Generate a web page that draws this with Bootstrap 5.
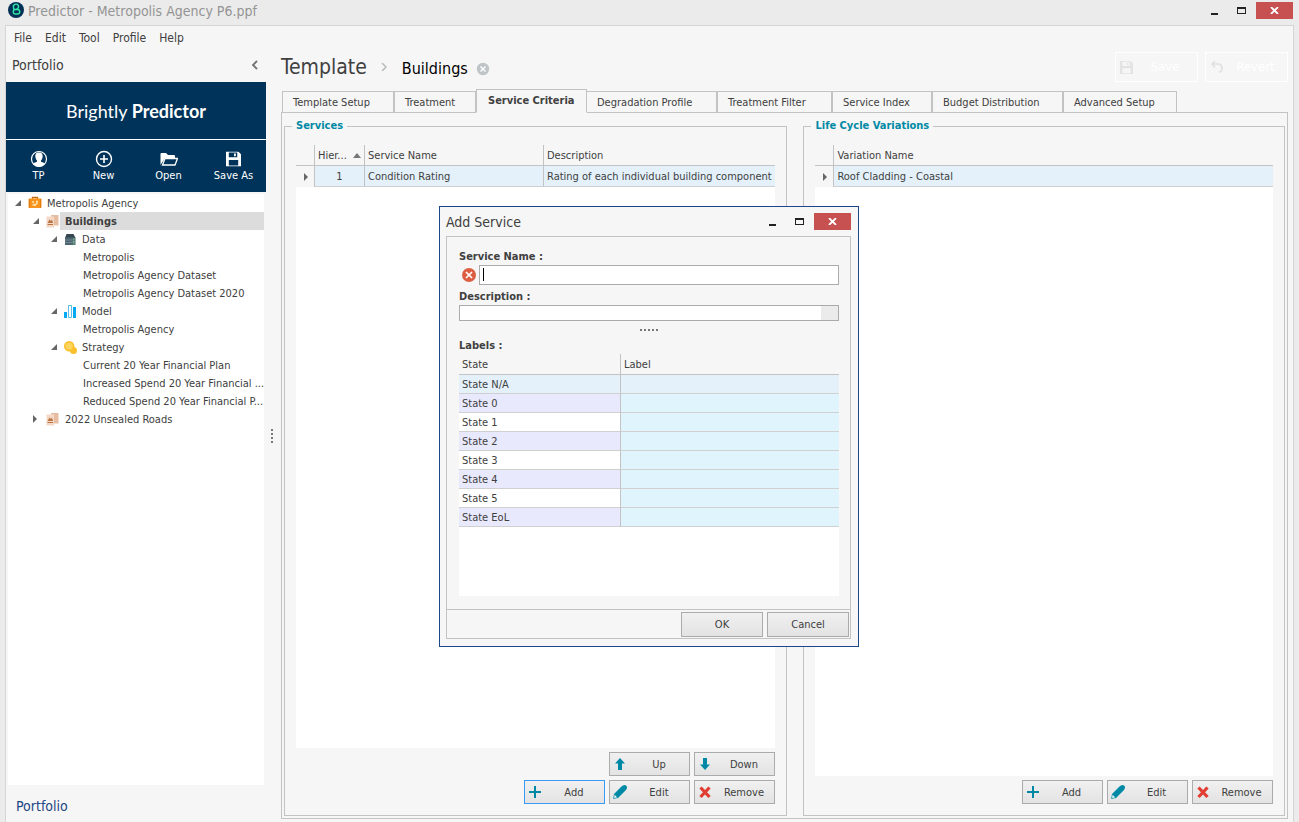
<!DOCTYPE html>
<html lang="en">
<head>
<meta charset="utf-8">
<meta name="viewport" content="width=device-width, initial-scale=1">
<title>Predictor - Metropolis Agency P6.ppf</title>
<link href="https://cdn.jsdelivr.net/npm/bootstrap@5.3.0/dist/css/bootstrap.min.css" rel="stylesheet">
<style>
:root{--line:#c3c3c3;--ink:#404040;--teal:#0089a5;--navy:#003359;--face:#f6f6f6}
body{font:11px/14px "DejaVu Sans Condensed","DejaVu Sans",sans-serif;color:var(--ink);background:#ebebeb;min-height:100vh}
button{font:inherit;color:inherit;background:none;border:0;padding:0}
svg{display:block;flex:none}
h1,h2,h3{margin:0;font-weight:400}
a{color:inherit;text-decoration:none}
.title-bar{height:25px}
.title-bar h1{font-size:14px;line-height:22px;color:#949494;padding-left:3px}
.win-controls{padding:2px 6px 0 0}
.win-close{width:37px;height:17px;background:#c75050;margin-left:1px}
.win-btn{width:27px;height:17px}
.app-frame{margin:0 5px;border:1px solid #d5d5d5;border-bottom:0;background:var(--face)}
.menu-bar{height:24px;padding-left:8px;gap:13px;font-size:12px}
.side-pane{width:260px}
.side-head{height:32px;padding:0 7px 2px 6px;font-size:14px}
.brand{height:58px;background:var(--navy);border-bottom:1px solid #fff;color:#fff;font:18px/24px Lato,sans-serif}
.side-tools{height:52px;background:var(--navy);color:#fff;padding-top:1px}
.side-tools button{gap:1px}
.side-tools svg{height:18px}
.tree{background:#fff;margin:2px 2px 0}
.tree li{display:flex;align-items:center;height:18px;white-space:nowrap}
.tree a{flex:1;min-width:0;line-height:17px;padding:1px 0 0 5px}
.tree .arrow{width:19px;padding-left:6px}
.lv1{padding-left:1px}.lv2{padding-left:19px}.lv3{padding-left:37px}.lv4{padding-left:70px}
.tree .chosen{background:#dcdcdc;font-weight:700}
.side-foot{height:37px;padding:5px 10px 0;font-size:14px;color:#1c4685}
.side-split{width:15px;padding-right:3px}
.dots{display:grid;gap:2px}
.dots i{width:2px;height:2px;background:#777}
.page-head{height:39px;padding:0 5px 5px 0}
.page-head h2{font-size:21px;line-height:28px}
.page-head h3{font-size:16px;line-height:20px;color:#000;padding-top:3px}
.page-head .crumb{margin:0 15px 0 14px}
.head-tools{gap:7px}
.ghost-btn{width:83px;height:30px;border:1px solid #fff;color:#fff;font-size:13px}
.tab-strip{height:24px;padding-left:1px;margin-bottom:-1px;position:relative}
.tab-strip button{height:22px;border:1px solid var(--line);padding:1px 0 0 10px;text-align:left;white-space:nowrap}
.tab-strip .current{height:24px;font-weight:700;background:var(--face);border-bottom-color:var(--face);padding:0 0 0 11px}
.tab-strip .after{border-left:0}
.work-area{border:1px solid var(--line);margin:0 5px 3px 0;padding:6px 2px 2px;gap:16px}
fieldset{border:1px solid var(--line);padding:12px 11px 11px}
legend{float:none;width:auto;font:700 11px/14px "DejaVu Sans Condensed",sans-serif;color:var(--teal);margin:0 0 0 -4px;padding:0 4px}
fieldset.w-services{flex:504 1 0;min-width:0}
fieldset.w-cycle{flex:481 1 0;min-width:0}
.sheet{background:#fff}
.sheet table{width:100%;table-layout:fixed;border-collapse:separate;border-spacing:0}
.sheet th{height:21px;padding:1px 3px 0;font-weight:400;background:var(--face);border-bottom:1px solid var(--line);white-space:nowrap;overflow:hidden}
.sheet td{height:21px;padding:1px 3px 0;background:#e4f1fb;border-bottom:1px solid #d0d0d0;white-space:nowrap;overflow:hidden}
.sheet th+th,.sheet td+td{border-left:1px solid var(--line)}
.sheet .gutter{background:var(--face);border-bottom-color:var(--face);padding-right:6px}
.tool-btn{width:81px;height:24px;border:1px solid #ababab;background:linear-gradient(#f0f0f0,#e3e3e3);display:flex;align-items:center;padding-left:2px}
.tool-btn span{flex:1;text-align:center;padding-top:1px}
.tool-btn.primed{border-color:#3b99f0}
.dialog-box{position:absolute;left:439px;top:206px;width:420px;border:1px solid #1c4685;background:var(--face);padding:6px 7px 7px 6px}
.dialog-head{height:23px}
.dialog-head h2{font-size:14px;line-height:19px}
.dialog-body{border:1px solid var(--line)}
.dialog-form{padding:13px 11px 13px 12px}
.dialog-form label,.cap{display:block;font-weight:700;line-height:14px}
.name-row{margin:1px 0 5px}
.name-row svg{margin:0 3px}
.name-box{height:20px;border:1px solid #ababab;background:#fff;position:relative}
.name-box::before{content:"";position:absolute;left:3px;top:2px;width:1px;height:13px;background:#000}
.dialog-box input{border:0;background:#fff;outline:0;padding:0 3px;min-width:0;caret-color:transparent}
.desc-box{height:16px;border:1px solid #ababab;background:#fff;margin-top:1px}
.desc-box button{width:17px;background:#ebebeb}
.cap{margin-bottom:1px}
.state-sheet{height:242px}
.state-sheet td{height:19px;background:#fff}
.state-sheet tr:nth-child(even) td{background:#e9e9fd}
.state-sheet td+td,.state-sheet tr:nth-child(even) td+td{background:#e0f4fe}
.state-sheet tr:first-child td{background:#e4f1fb}
.dialog-foot{border-top:1px solid var(--line);padding:2px 1px 1px;gap:4px}
.dialog-foot .tool-btn{width:82px;height:25px;padding:0}
</style>
</head>
<body class="d-flex flex-column">
<svg width="0" height="0" class="position-absolute" aria-hidden="true">
  <defs>
    <symbol id="open" viewBox="0 0 6 6"><path d="M6 0v6H0z" fill="#666"/></symbol>
    <symbol id="shut" viewBox="0 0 4 8"><path d="M0 0l4 4-4 4z" fill="#666"/></symbol>
    <symbol id="min" viewBox="0 0 7 9"><path d="M0 7h7v2H0z" fill="#222"/></symbol>
    <symbol id="max" viewBox="0 0 9 7"><path d="M0 0h9v7H0zM1 2v4h7V2z" fill="#222" fill-rule="evenodd"/></symbol>
    <symbol id="cross" viewBox="0 0 9 7"><path d="M1 0l7 7M8 0L1 7" stroke="#fff" stroke-width="1.8"/></symbol>
    <symbol id="plans" viewBox="0 0 14 14"><path d="M5 1h7.500v10.500H5z" fill="#e6bda0"/><path d="M.5 2.500h7.500v11H.5z" fill="#f3d9c6"/><path d="M1.500 9l2-3.500 1.500 1.500 1-1.500 1 3.500zM1.500 10h5.500v1H1.500z" fill="#bb7544"/></symbol>
    <symbol id="plus" viewBox="0 0 16 16"><path d="M7 2h2v5h5v2H9v5H7V9H2V7h5z" fill="#0089a5"/></symbol>
    <symbol id="pencil" viewBox="0 0 16 16"><path d="M1.500 14.500l1-4.500 3.500 3.500z" fill="#fff" stroke="#0089a5" stroke-width=".8"/><path d="M2 10L9.500 2.500Q12 0 14 1.500T14 6L6 14z" fill="#0089a5"/></symbol>
    <symbol id="remove" viewBox="0 0 16 16"><path d="M3.500 3.500l9 9.500M12.500 3.500l-9 9.500" stroke="#e03c31" stroke-width="3.200"/></symbol>
    <symbol id="up" viewBox="0 0 16 16"><path d="M8 2l5 5.500h-3V14H6V7.500H3z" fill="#0089a5"/></symbol>
    <symbol id="down" viewBox="0 0 16 16"><path d="M8 14l5-5.500h-3V2H6v6.500H3z" fill="#0089a5"/></symbol>
    <symbol id="disk" viewBox="0 0 16 16"><path d="M0 0h13l3 3v13H0zM3 1v5h9V1zM3 9v6h10V9zM8.500 2h2v3h-2z" fill="currentColor" fill-rule="evenodd"/></symbol>
  </defs>
</svg>

<header class="title-bar d-flex align-items-start">
  <svg class="ms-2" width="17" height="18" viewBox="0 0 17 18"><circle cx="8" cy="10" r="8" fill="#043055"/><path d="M5.500 5v3q0 1.500 2 1.500h2a2.200 2.200 0 1 1 0 4.500H7.500a2.200 2.200 0 0 1 0-4.500M5.500 6.500a2.300 2.300 0 0 1 5 .2q0 2-2.500 2.800" fill="none" stroke="#2ee6a8" stroke-width="1.400"/></svg>
  <h1 class="flex-grow-1">Predictor - Metropolis Agency P6.ppf</h1>
  <div class="win-controls d-flex">
    <button class="win-btn d-flex justify-content-center align-items-center" aria-label="Minimize"><svg width="7" height="9"><use href="#min"/></svg></button>
    <button class="win-btn d-flex justify-content-center align-items-center" aria-label="Maximize"><svg width="9" height="7"><use href="#max"/></svg></button>
    <button class="win-close d-flex justify-content-center align-items-center" aria-label="Close"><svg width="9" height="7"><use href="#cross"/></svg></button>
  </div>
</header>

<div class="app-frame flex-grow-1 d-flex flex-column">
  <nav class="menu-bar d-flex align-items-center" aria-label="Main menu">
    <a href="#">File</a><a href="#">Edit</a><a href="#">Tool</a><a href="#">Profile</a><a href="#">Help</a>
  </nav>
  <div class="flex-grow-1 d-flex">
    <aside class="side-pane flex-shrink-0 d-flex flex-column">
      <div class="side-head d-flex align-items-center justify-content-between">
        <span>Portfolio</span>
        <button aria-label="Collapse"><svg width="9" height="10" viewBox="0 0 9 10"><path d="M7 1L3 5l4 4" fill="none" stroke="#707070" stroke-width="1.800"/></svg></button>
      </div>
      <div class="brand d-flex align-items-center justify-content-center"><span>Brightly <b>Predictor</b></span></div>
      <div class="side-tools d-flex align-items-center">
        <button class="d-flex flex-column align-items-center col-3"><svg width="18" height="18" viewBox="0 0 18 18"><circle cx="9" cy="9" r="7.500" fill="none" stroke="#fff" stroke-width="1.200"/><path d="M9 2.500c3 0 4 2 3.600 4.500-.3 2-1 3-1.600 3.600v1.200c2 .7 3.500 1 4 2Q12.500 17 9 17t-6-3.200c.5-1 2-1.300 4-2v-1.200C6.400 10 5.700 9 5.400 7 5 4.500 6 2.500 9 2.500z" fill="#fff"/></svg>TP</button>
        <button class="d-flex flex-column align-items-center col-3"><svg width="18" height="18" viewBox="0 0 18 18"><circle cx="9" cy="9" r="7.500" fill="none" stroke="#fff" stroke-width="1.400"/><path d="M9 5v8M5 9h8" stroke="#fff" stroke-width="1.600"/></svg>New</button>
        <button class="d-flex flex-column align-items-center col-3"><svg width="18" height="18" viewBox="0 0 18 18"><path d="M.5 15V4q0-1 1-1h4.500l2 2h6q1 0 1 1v2H5z" fill="#fff"/><path d="M5 8.500h12.500L15 15H2.500z" fill="#003359" stroke="#fff" stroke-width="1.300"/></svg>Open</button>
        <button class="d-flex flex-column align-items-center col-3"><svg width="15" height="18" viewBox="0 -1 16 18" color="#fff"><use href="#disk" width="16" height="16"/></svg>Save As</button>
      </div>
      <ul class="tree list-unstyled mb-0 flex-grow-1">
        <li class="lv1"><span class="arrow"><svg width="6" height="6"><use href="#open"/></svg></span><svg width="14" height="14" viewBox="0 0 14 14"><path d="M4.500 3V1.500h5V3" fill="none" stroke="#c26c13" stroke-width="1.300"/><rect x=".5" y="2.500" width="13" height="9.500" rx="1" fill="#f7941d"/><path d="M1.500 3v9M12.500 3v9" stroke="#df7d10"/><path d="M4 6h2M8 5.500h2M4.500 9.500l1.500-1 1 1 2.500-3" fill="none" stroke="#ffe3b0" stroke-width="1.400"/></svg><a href="#">Metropolis Agency</a></li>
        <li class="lv2"><span class="arrow"><svg width="6" height="6"><use href="#open"/></svg></span><svg width="14" height="14"><use href="#plans"/></svg><a href="#" class="chosen">Buildings</a></li>
        <li class="lv3"><span class="arrow"><svg width="6" height="6"><use href="#open"/></svg></span><svg width="13" height="13" viewBox="0 0 13 13"><path d="M2.500 1h7l2 4H1z" fill="#37474f"/><path d="M1 4.500h10.500V12H1z" fill="#4d6672"/><path d="M1 7h10.500M1 9.500h10.500" stroke="#8499a3" stroke-width=".6"/><path d="M9 6h1.500M9 8.500h1.500M9 11h1.500" stroke="#6fd67c"/></svg><a href="#">Data</a></li>
        <li class="lv4"><a href="#">Metropolis</a></li>
        <li class="lv4"><a href="#">Metropolis Agency Dataset</a></li>
        <li class="lv4"><a href="#">Metropolis Agency Dataset 2020</a></li>
        <li class="lv3"><span class="arrow"><svg width="6" height="6"><use href="#open"/></svg></span><svg width="13" height="13" viewBox="0 0 13 13"><path d="M0 7h3v6H0zM9 2h3v11H9z" fill="#00aaf2"/><path d="M4.500.5h3v12h-3z" fill="#fff" stroke="#59bfe8"/></svg><a href="#">Model</a></li>
        <li class="lv4"><a href="#">Metropolis Agency</a></li>
        <li class="lv3"><span class="arrow"><svg width="6" height="6"><use href="#open"/></svg></span><svg width="13" height="13" viewBox="0 0 13 13"><circle cx="9.500" cy="9.500" r="3.500" fill="#f9bf2c"/><circle cx="5.200" cy="5.200" r="5.200" fill="#fbc02d"/><circle cx="5.200" cy="5.200" r="3.400" fill="#fdd660"/></svg><a href="#">Strategy</a></li>
        <li class="lv4"><a href="#">Current 20 Year Financial Plan</a></li>
        <li class="lv4"><a href="#">Increased Spend 20 Year Financial ...</a></li>
        <li class="lv4"><a href="#">Reduced Spend 20 Year Financial P...</a></li>
        <li class="lv2"><span class="arrow"><svg width="4" height="8"><use href="#shut"/></svg></span><svg width="14" height="14"><use href="#plans"/></svg><a href="#">2022 Unsealed Roads</a></li>
      </ul>
      <div class="side-foot d-flex align-items-center"><a href="#">Portfolio</a></div>
    </aside>
    <div class="side-split flex-shrink-0 d-flex align-items-center justify-content-center"><span class="dots"><i></i><i></i><i></i><i></i></span></div>

    <main class="flex-grow-1 d-flex flex-column" style="min-width:0">
      <div class="page-head d-flex align-items-center">
        <h2>Template</h2>
        <svg class="crumb" width="6" height="8" viewBox="0 0 6 8"><path d="M1 0l4 4-4 4" fill="none" stroke="#b5b9bb" stroke-width="1.500"/></svg>
        <h3>Buildings</h3>
        <button class="ms-2 pt-1" aria-label="Close Buildings"><svg width="14" height="14" viewBox="0 0 14 14"><circle cx="7" cy="7" r="6.200" fill="#bfc4c6"/><path d="M4.500 4.500l5 5m0-5l-5 5" stroke="#fff" stroke-width="1.400"/></svg></button>
        <div class="head-tools d-flex ms-auto">
          <button class="ghost-btn d-flex align-items-center ps-1"><svg width="13" height="13" color="#e3e3e3" viewBox="0 0 16 16"><use href="#disk"/></svg><span class="flex-grow-1">Save</span></button>
          <button class="ghost-btn d-flex align-items-center ps-1"><svg width="14" height="14" viewBox="0 0 14 14"><path d="M5 1L2 4l3 3.500M2 4h6q4 0 4 4t-3 4" fill="none" stroke="#e0e0e0" stroke-width="1.600"/></svg><span class="flex-grow-1">Revert</span></button>
        </div>
      </div>
      <div class="tab-strip d-flex align-items-end" role="tablist">
        <button role="tab" style="width:112px">Template Setup</button>
        <button role="tab" style="width:82px">Treatment</button>
        <button role="tab" class="current" aria-selected="true" style="width:111px">Service Criteria</button>
        <button role="tab" class="after" style="width:130px">Degradation Profile</button>
        <button role="tab" style="width:115px">Treatment Filter</button>
        <button role="tab" style="width:100px">Service Index</button>
        <button role="tab" style="width:131px">Budget Distribution</button>
        <button role="tab" style="width:114px">Advanced Setup</button>
      </div>
      <div class="work-area flex-grow-1 d-flex">
        <fieldset class="w-services d-flex flex-column">
          <legend>Services</legend>
          <div class="sheet flex-grow-1">
            <table>
              <colgroup><col style="width:18px"><col style="width:50px"><col style="width:179px"><col></colgroup>
              <thead><tr><th></th><th><span class="d-flex align-items-center justify-content-between">Hier...<svg width="8" height="5" viewBox="0 0 8 5"><path d="M0 5l4-5 4 5z" fill="#777"/></svg></span></th><th>Service Name</th><th>Description</th></tr></thead>
              <tbody><tr><td class="gutter"><svg class="ms-auto" width="4" height="8"><use href="#shut"/></svg></td><td class="text-center">1</td><td>Condition Rating</td><td>Rating of each individual building component</td></tr></tbody>
            </table>
          </div>
          <div class="d-flex justify-content-end gap-1 pt-1">
            <button class="tool-btn"><svg width="16" height="16"><use href="#up"/></svg><span>Up</span></button>
            <button class="tool-btn"><svg width="16" height="16"><use href="#down"/></svg><span>Down</span></button>
          </div>
          <div class="d-flex justify-content-end gap-1 pt-1">
            <button class="tool-btn primed"><svg width="16" height="16"><use href="#plus"/></svg><span>Add</span></button>
            <button class="tool-btn"><svg width="16" height="16"><use href="#pencil"/></svg><span>Edit</span></button>
            <button class="tool-btn"><svg width="16" height="16"><use href="#remove"/></svg><span>Remove</span></button>
          </div>
        </fieldset>
        <fieldset class="w-cycle d-flex flex-column">
          <legend>Life Cycle Variations</legend>
          <div class="sheet flex-grow-1">
            <table>
              <colgroup><col style="width:18px"><col></colgroup>
              <thead><tr><th></th><th>Variation Name</th></tr></thead>
              <tbody><tr><td class="gutter"><svg class="ms-auto" width="4" height="8"><use href="#shut"/></svg></td><td>Roof Cladding - Coastal</td></tr></tbody>
            </table>
          </div>
          <div class="d-flex justify-content-end gap-1 pt-1">
            <button class="tool-btn"><svg width="16" height="16"><use href="#plus"/></svg><span>Add</span></button>
            <button class="tool-btn"><svg width="16" height="16"><use href="#pencil"/></svg><span>Edit</span></button>
            <button class="tool-btn"><svg width="16" height="16"><use href="#remove"/></svg><span>Remove</span></button>
          </div>
        </fieldset>
      </div>
    </main>
  </div>
</div>

<div class="dialog-box" role="dialog" aria-labelledby="dlgTitle">
  <div class="dialog-head d-flex align-items-start">
    <h2 id="dlgTitle" class="me-auto">Add Service</h2>
    <button class="win-btn d-flex justify-content-center align-items-center" aria-label="Minimize"><svg width="7" height="9"><use href="#min"/></svg></button>
    <button class="win-btn d-flex justify-content-center align-items-center" aria-label="Maximize"><svg width="9" height="7"><use href="#max"/></svg></button>
    <button class="win-close d-flex justify-content-center align-items-center" aria-label="Close"><svg width="9" height="7"><use href="#cross"/></svg></button>
  </div>
  <div class="dialog-body">
    <div class="dialog-form">
      <label for="svcName">Service Name :</label>
      <div class="name-row d-flex align-items-center">
        <svg width="14" height="14" viewBox="0 0 14 14"><circle cx="7" cy="7" r="7" fill="#dc5f43"/><path d="M4 4l6 6m0-6l-6 6" stroke="#fff" stroke-width="1.700"/></svg>
        <div class="name-box flex-grow-1 d-flex"><input id="svcName" type="text" class="flex-grow-1"></div>
      </div>
      <label for="svcDesc">Description :</label>
      <div class="desc-box d-flex"><input id="svcDesc" type="text" class="flex-grow-1"><button aria-label="Expand description"></button></div>
      <div class="dots d-flex justify-content-center my-2"><i></i><i></i><i></i><i></i><i></i></div>
      <div class="cap">Labels :</div>
      <div class="sheet state-sheet">
        <table>
          <colgroup><col style="width:161px"><col></colgroup>
          <thead><tr><th>State</th><th>Label</th></tr></thead>
          <tbody>
            <tr><td>State N/A</td><td></td></tr><tr><td>State 0</td><td></td></tr><tr><td>State 1</td><td></td></tr><tr><td>State 2</td><td></td></tr>
            <tr><td>State 3</td><td></td></tr><tr><td>State 4</td><td></td></tr><tr><td>State 5</td><td></td></tr><tr><td>State EoL</td><td></td></tr>
          </tbody>
        </table>
      </div>
    </div>
    <div class="dialog-foot d-flex justify-content-end">
      <button class="tool-btn"><span>OK</span></button>
      <button class="tool-btn"><span>Cancel</span></button>
    </div>
  </div>
</div>
<script src="https://cdn.jsdelivr.net/npm/bootstrap@5.3.0/dist/js/bootstrap.bundle.min.js"></script>
</body>
</html>
